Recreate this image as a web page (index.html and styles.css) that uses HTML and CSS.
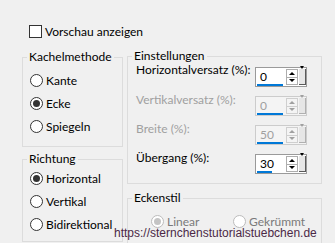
FILE: index.html
```html
<!DOCTYPE html>
<html lang="de">
<head>
    <meta charset="UTF-8">
    <title>Kacheln</title>
    <link rel="stylesheet" href="styles.css">
</head>
<body>
<div class="dialog">
    <!-- Vorschau -->
    <label class="preview">
        <span class="check"></span>
        <span>Vorschau anzeigen</span>
    </label>

    <div class="columns">
        <div class="col-left">
            <fieldset class="group tiles">
                <legend>Kachelmethode</legend>
                <div class="option"><span class="radio"></span>Kante</div>
                <div class="option"><span class="radio on"></span>Ecke</div>
                <div class="option"><span class="radio"></span>Spiegeln</div>
            </fieldset>

            <fieldset class="group direction">
                <legend>Richtung</legend>
                <div class="option"><span class="radio on"></span>Horizontal</div>
                <div class="option"><span class="radio"></span>Vertikal</div>
                <div class="option"><span class="radio"></span>Bidirektional</div>
            </fieldset>
        </div>

        <div class="col-right">
            <fieldset class="group settings">
                <legend>Einstellungen</legend>

                <div class="row first">
                    <span class="row-label">Horizontalversatz (%):</span>
                    <div class="spin">
                        <div class="spin-field"><span>0</span><i class="bar" style="width:26px"></i></div>
                        <div class="updown"><b class="up"></b><b class="down"></b></div>
                        <div class="drop"><b class="down"></b></div>
                    </div>
                </div>

                <div class="row disabled">
                    <span class="row-label">Vertikalversatz (%):</span>
                    <div class="spin">
                        <div class="spin-field"><span>0</span><i class="bar" style="width:26px"></i></div>
                        <div class="updown"><b class="up"></b><b class="down"></b></div>
                        <div class="drop"><b class="down"></b></div>
                    </div>
                </div>

                <div class="row disabled">
                    <span class="row-label">Breite (%):</span>
                    <div class="spin">
                        <div class="spin-field"><span>50</span><i class="bar" style="width:26px"></i></div>
                        <div class="updown"><b class="up"></b><b class="down"></b></div>
                        <div class="drop"><b class="down"></b></div>
                    </div>
                </div>

                <div class="row">
                    <span class="row-label">Übergang (%):</span>
                    <div class="spin">
                        <div class="spin-field"><span>30</span><i class="bar" style="width:15px"></i></div>
                        <div class="updown"><b class="up"></b><b class="down"></b></div>
                        <div class="drop"><b class="down"></b></div>
                    </div>
                </div>
            </fieldset>

            <fieldset class="group corners">
                <legend>Eckenstil</legend>
                <div class="corner-row">
                    <div class="option off linear"><span class="radio on"></span>Linear</div>
                    <div class="option off"><span class="radio"></span>Gekrümmt</div>
                </div>
            </fieldset>
        </div>
    </div>
</div>

<!-- Wasserzeichen -->
<div class="watermark">https://sternchenstutorialstuebchen.de</div>
</body>
</html>
```

FILE: styles.css
```css
/* Windows style dialog */
body {
  margin: 0;
  width: 335px;
  height: 243px;
  overflow: hidden;
  position: relative;
  background-color: #f0f0f0;
  font-family: Lato, "Noto Sans", sans-serif;
  font-size: 12px;
  color: #000;
}
.preview {
  display: flex;
  align-items: center;
  gap: 3px;
  margin: 25px 0 0 29px;
  height: 13px;
}
.check {
  width: 11px;
  height: 11px;
  border: 1px solid #333;
  background: #fff;
}
.columns {
  display: flex;
  align-items: flex-start;
  gap: 4px;
  margin: 11px 0 0 22px;
}
.col-left {
  width: 101px;
  display: flex;
  flex-direction: column;
  gap: 4px;
}
.col-right {
  width: 195px;
  margin-top: -1px;
  display: flex;
  flex-direction: column;
  gap: 6px;
}
/* Group boxes */
.group {
  margin: 0;
  min-width: 0;
  border: 1px solid #dcdcdc;
  padding: 0 0 0 7px;
}
.group legend {
  padding: 0 2px;
  margin-left: -3px;
  line-height: 16px;
}
.tiles {
  padding-top: 4px;
  padding-bottom: 8px;
}
.direction {
  padding-top: 0;
  padding-bottom: 5px;
}
/* Radio buttons */
.option {
  display: flex;
  align-items: center;
  gap: 3px;
  height: 23px;
  white-space: nowrap;
}
.radio {
  width: 11px;
  height: 11px;
  border: 1px solid #333;
  border-radius: 50%;
  background: #fff;
  display: flex;
  align-items: center;
  justify-content: center;
  flex-shrink: 0;
}
.radio.on::after {
  content: "";
  width: 7px;
  height: 7px;
  border-radius: 50%;
  background: #333;
}
.option.off {
  color: #7a7a7a;
}
.option.off .radio {
  border-color: #bcbcbc;
}
.option.off .radio.on::after {
  background: #c4c4c4;
}
/* Settings */
.settings {
  padding: 3px 14px 9px 8px;
}
.settings legend {
  margin-left: -4px;
}
.row {
  display: flex;
  justify-content: space-between;
  align-items: flex-start;
  height: 20px;
  margin-bottom: 9px;
}
.row:last-child {
  margin-bottom: 0;
}
.row-label {
  margin-top: -4px;
  line-height: 16px;
  white-space: nowrap;
}
.row.first .row-label {
  margin-top: -5px;
}
.row.disabled .row-label {
  color: #a0a0a0;
}
/* Spin box */
.spin {
  display: flex;
  width: 50px;
  height: 18px;
  border: 1px solid #9a9a9a;
  background: #fff;
}
.spin-field {
  width: 28px;
  padding-top: 2px;
}
.spin-field span {
  display: block;
  padding-left: 4px;
  line-height: 14px;
}
.bar {
  display: block;
  height: 2px;
  margin-left: 1px;
  background: #0078d7;
}
.updown {
  width: 10px;
  margin: 1px 1px 1px 2px;
  border: 1px solid #adadad;
  display: flex;
  flex-direction: column;
}
.updown b {
  flex: 1;
  display: flex;
  align-items: center;
  justify-content: center;
}
.updown b + b {
  border-top: 1px solid #adadad;
}
.up::after,
.down::after {
  content: "";
  border-left: 3px solid transparent;
  border-right: 3px solid transparent;
}
.up::after {
  border-bottom: 3px solid #000;
}
.down::after {
  border-top: 3px solid #000;
}
.drop {
  width: 6px;
  margin: 1px 0;
  background: #e6e6e6;
  border-right: 1px solid #5a5a5a;
  border-bottom: 1px solid #5a5a5a;
  display: flex;
  align-items: center;
  justify-content: center;
}
.drop .down::after {
  border-left-width: 2px;
  border-right-width: 2px;
}
.row.disabled .spin {
  border-color: #cccccc;
  background: #f4f4f4;
}
.row.disabled .spin-field span {
  color: #a0a0a0;
}
.row.disabled .updown,
.row.disabled .updown b + b {
  border-color: #cfcfcf;
}
.row.disabled .up::after {
  border-bottom-color: #a0a0a0;
}
.row.disabled .down::after {
  border-top-color: #a0a0a0;
}
.row.disabled .drop {
  border-color: #b0b0b0;
}
/* Corner style */
.corners {
  padding: 7px 0 40px 8px;
}
.corners legend {
  margin-left: -4px;
}
.corner-row {
  display: flex;
  padding-left: 15px;
}
.corner-row .option {
  height: 16px;
}
.corner-row .linear {
  width: 82px;
}
.watermark {
  position: absolute;
  left: 114px;
  top: 226px;
  font-family: "Liberation Sans", Arial, sans-serif;
  font-size: 12px;
  line-height: 14px;
  color: #4b2846;
}
```
